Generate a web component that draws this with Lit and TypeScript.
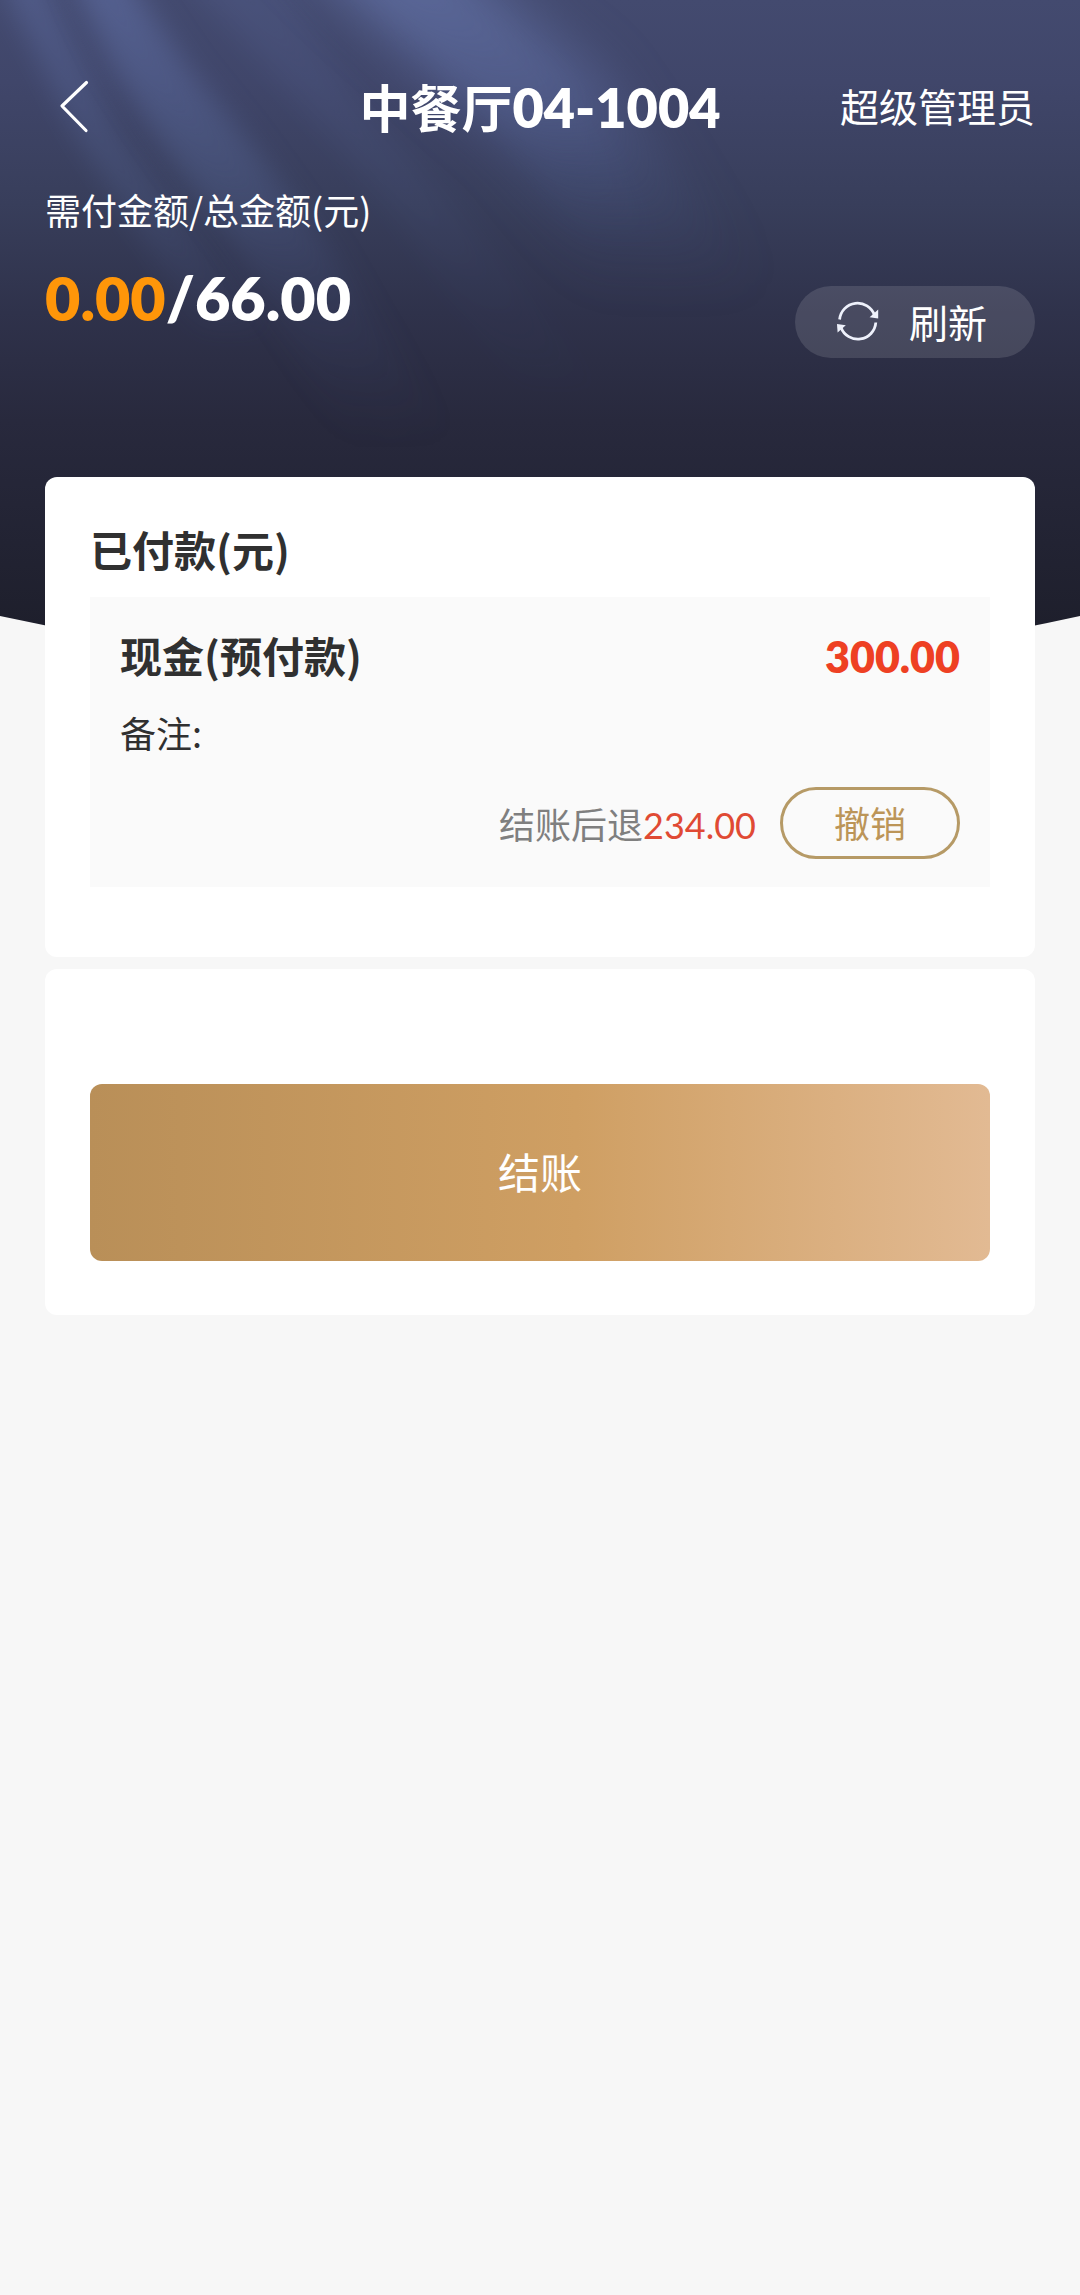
import { LitElement, html, css } from "lit";
import { customElement, property, state } from "lit/decorators.js";

interface Payment {
  name: string;
  amount: string;
  remark: string;
  refund: string;
}

const base = css`
  * {
    box-sizing: border-box;
  }
  button {
    font: inherit;
    color: inherit;
    border: 0;
    padding: 0;
    background: none;
    cursor: pointer;
  }
  h1,
  h2,
  h3,
  p {
    margin: 0;
  }
  .num {
    font-family: Lato, "Noto Sans CJK SC", sans-serif;
  }
`;

@customElement("header-backdrop")
export class HeaderBackdrop extends LitElement {
  static styles = css`
    :host {
      display: block;
    }
    .art {
      display: block;
      width: 100%;
      height: 100%;
    }
  `;

  render() {
    return html`
      <svg class="art" viewBox="0 0 1080 680" preserveAspectRatio="none" aria-hidden="true">
        <defs>
          <linearGradient id="night" x1="0" y1="0" x2="0" y2="680" gradientUnits="userSpaceOnUse">
            <stop offset="0" stop-color="#434a6f" />
            <stop offset="0.12" stop-color="#40466a" />
            <stop offset="0.3" stop-color="#383e5b" />
            <stop offset="0.46" stop-color="#2f324b" />
            <stop offset="0.62" stop-color="#28293d" />
            <stop offset="0.92" stop-color="#1e1f2c" />
            <stop offset="1" stop-color="#1e1f2c" />
          </linearGradient>
          <linearGradient id="ray" x1="0" y1="0" x2="0" y2="440" gradientUnits="userSpaceOnUse">
            <stop offset="0" stop-color="#6879b4" stop-opacity="0.46" />
            <stop offset="0.4" stop-color="#5e72a8" stop-opacity="0.3" />
            <stop offset="0.7" stop-color="#5468a0" stop-opacity="0.1" />
            <stop offset="1" stop-color="#4a5c90" stop-opacity="0" />
          </linearGradient>
          <linearGradient id="wide" x1="0" y1="0" x2="0" y2="290" gradientUnits="userSpaceOnUse">
            <stop offset="0" stop-color="#6c7db6" stop-opacity="0.46" />
            <stop offset="0.35" stop-color="#6475ae" stop-opacity="0.36" />
            <stop offset="0.65" stop-color="#5669a0" stop-opacity="0.16" />
            <stop offset="1" stop-color="#4a5c90" stop-opacity="0" />
          </linearGradient>
          <filter id="soft" x="-30%" y="-30%" width="160%" height="160%" color-interpolation-filters="sRGB">
            <feGaussianBlur stdDeviation="14" />
          </filter>
          <filter id="softer" x="-30%" y="-30%" width="160%" height="160%" color-interpolation-filters="sRGB">
            <feGaussianBlur stdDeviation="24" />
          </filter>
          <clipPath id="bowl">
            <path d="M0 0H1080V616Q540 735 0 616Z" />
          </clipPath>
        </defs>
        <g clip-path="url(#bowl)">
          <rect width="1080" height="680" fill="url(#night)" />
          <path d="M-10 -60L10 0L75 133L200 330H270L117 133L52 0L30 -60Z" fill="url(#ray)" opacity="0.8" filter="url(#soft)" />
          <path d="M60 -60L80 0L112 67L154 133L236 250L350 440H450L330 250L242 133L188 67L142 0L108 -60Z" fill="url(#ray)" filter="url(#soft)" />
          <path d="M160 -60L207 0L296 100L385 200L520 400H620L448 200L358 100L290 0L240 -60Z" fill="url(#ray)" opacity="0.35" filter="url(#soft)" />
          <path d="M280 -60L340 0L413 67L503 150L600 290H760L660 150L600 67L515 0L450 -60Z" fill="url(#wide)" filter="url(#softer)" />
          <path d="M320 -60L370 0L440 67L520 150L580 240H660L610 150L560 67L470 0L420 -60Z" fill="url(#wide)" opacity="0.35" filter="url(#soft)" />
        </g>
      </svg>
    `;
  }
}

@customElement("payment-item")
export class PaymentItem extends LitElement {
  @property({ attribute: false }) payment!: Payment;

  static styles = [
    base,
    css`
      :host {
        display: block;
      }
      .item {
        display: flex;
        flex-direction: column;
        padding: 28px 30px;
        background: #fafafa;
      }
      .top {
        display: flex;
        justify-content: space-between;
        align-items: baseline;
        line-height: 60px;
      }
      .name {
        font-size: 42px;
        font-weight: 700;
      }
      .amount {
        font-size: 43px;
        font-weight: 800;
        color: #ee4023;
      }
      .remark {
        margin-top: 18px;
        font-size: 36px;
        line-height: 54px;
      }
      .bottom {
        display: flex;
        justify-content: flex-end;
        align-items: center;
        gap: 24px;
        margin-top: 28px;
        font-size: 36px;
      }
      .refund {
        color: #7f7f7f;
      }
      .refund .num {
        color: #e04a34;
      }
      .undo {
        width: 180px;
        height: 72px;
        padding-bottom: 2px;
        border: 3px solid #b69a66;
        border-radius: 36px;
        color: #bc9558;
      }
    `,
  ];

  render() {
    const p = this.payment;
    return html`
      <article class="item">
        <div class="top">
          <h3 class="name">${p.name}</h3>
          <span class="amount num">${p.amount}</span>
        </div>
        <p class="remark">备注:${p.remark}</p>
        <div class="bottom">
          <span class="refund">结账后退<span class="num">${p.refund}</span></span>
          <button class="undo" type="button">撤销</button>
        </div>
      </article>
    `;
  }
}

@customElement("app-root")
export class AppRoot extends LitElement {
  @state() private payments: Payment[] = [
    { name: "现金(预付款)", amount: "300.00", remark: "", refund: "234.00" },
  ];

  static styles = [
    base,
    css`
      :host {
        display: block;
        font-family: "Noto Sans CJK SC", sans-serif;
        color: #303030;
      }
      .page {
        position: relative;
        isolation: isolate;
        min-height: 100vh;
        background: #f7f7f7;
      }
      .backdrop {
        position: absolute;
        z-index: -1;
        top: 0;
        left: 0;
        width: 100%;
        height: 680px;
      }
      .header {
        padding: 60px 45px 119px;
        color: #fff;
      }
      .nav {
        display: grid;
        grid-template-columns: 1fr auto 1fr;
        align-items: center;
        height: 94px;
      }
      .back {
        justify-self: start;
        display: flex;
        padding: 8px 14px;
      }
      .chevron {
        width: 30px;
        height: 54px;
      }
      .title {
        font-size: 51px;
        font-weight: 700;
        line-height: 72px;
      }
      .title .num {
        font-size: 54px;
        font-weight: 800;
      }
      .user {
        justify-self: end;
        padding-bottom: 4px;
        font-size: 39px;
      }
      .summary {
        display: flex;
        justify-content: space-between;
        align-items: flex-end;
        margin-top: 28px;
      }
      .totals {
        padding-bottom: 24px;
      }
      .label {
        font-size: 36px;
        line-height: 54px;
      }
      .sum {
        margin-top: 26px;
        font-size: 61px;
        font-weight: 800;
        line-height: 72px;
      }
      .due {
        color: #ff9609;
      }
      .refresh {
        display: flex;
        justify-content: center;
        align-items: center;
        gap: 30px;
        width: 240px;
        height: 72px;
        padding: 0 6px 2px 0;
        border-radius: 36px;
        background: rgba(255, 255, 255, 0.12);
        font-size: 39px;
      }
      .cycle {
        width: 42px;
        height: 42px;
      }
      .cards {
        display: flex;
        flex-direction: column;
        gap: 12px;
        padding: 0 45px 45px;
      }
      .card {
        padding: 42px 45px 70px;
        border-radius: 12px;
        background: #fff;
      }
      .heading {
        margin-bottom: 18px;
        font-size: 42px;
        font-weight: 700;
        line-height: 60px;
      }
      .action {
        padding: 115px 45px 54px;
      }
      .settle {
        display: block;
        width: 100%;
        height: 177px;
        padding-bottom: 4px;
        border-radius: 12px;
        background: linear-gradient(90deg, #b98f58 0%, #cf9f63 54%, #e2ba93 100%);
        color: #fff;
        font-size: 42px;
      }
    `,
  ];

  render() {
    return html`
      <main class="page">
        <header-backdrop class="backdrop"></header-backdrop>
        <header class="header">
          <nav class="nav">
            <button class="back" type="button" aria-label="返回">
              <svg class="chevron" viewBox="0 0 30 54" fill="none" stroke="#fff" stroke-width="3.2" stroke-linecap="round" stroke-linejoin="round">
                <path d="M27.5 2.5L3 26L27 50.5" />
              </svg>
            </button>
            <h1 class="title">中餐厅<span class="num">04-1004</span></h1>
            <span class="user">超级管理员</span>
          </nav>
          <section class="summary">
            <div class="totals">
              <p class="label">需付金额/总金额(元)</p>
              <p class="sum num"><span class="due">0.00</span>/66.00</p>
            </div>
            <button class="refresh" type="button">
              <svg class="cycle" viewBox="0 0 42 42" fill="none" stroke="#eef1fb" stroke-width="2.8" aria-hidden="true">
                <path d="M2.6 19.5A18 18 0 0 1 37.5 15.2" />
                <path d="M38.8 22.5A18 18 0 0 1 4 27.5" />
                <path d="M41.2 9.5V18.4L32.6 17.2Z" fill="#eef1fb" stroke="none" />
                <path d="M0 24L8.8 25.2L0.6 32.6Z" fill="#eef1fb" stroke="none" />
              </svg>
              刷新
            </button>
          </section>
        </header>
        <div class="cards">
          <section class="card">
            <h2 class="heading">已付款(元)</h2>
            ${this.payments.map((p) => html`<payment-item .payment=${p}></payment-item>`)}
          </section>
          <section class="card action">
            <button class="settle" type="button">结账</button>
          </section>
        </div>
      </main>
    `;
  }
}
